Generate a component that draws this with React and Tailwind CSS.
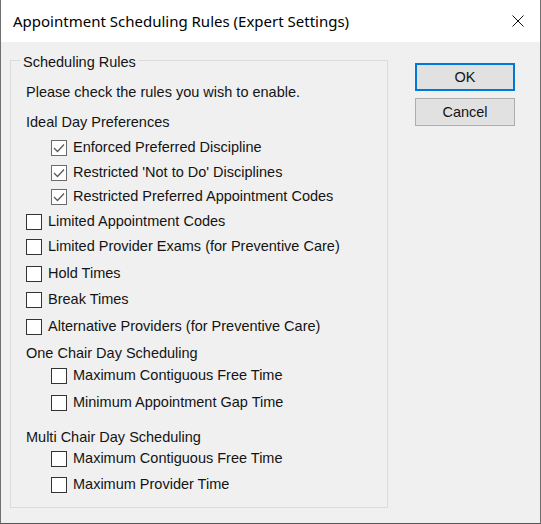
// Appointment Scheduling Rules dialog - classic Windows-style group box with checkbox list.
const rows = [
  { label: "Please check the rules you wish to enable.", level: 0, mt: "mt-[11px]" },
  { label: "Ideal Day Preferences", level: 0, mt: "mt-[6px]" },
  { label: "Enforced Preferred Discipline", level: 2, checked: true, mt: "mt-[1px]" },
  { label: "Restricted 'Not to Do' Disciplines", level: 2, checked: true, mt: "mt-[1px]" },
  { label: "Restricted Preferred Appointment Codes", level: 2, checked: true, mt: "mt-0" },
  { label: "Limited Appointment Codes", level: 1, mt: "mt-[1px]" },
  { label: "Limited Provider Exams (for Preventive Care)", level: 1, mt: "mt-[1px]" },
  { label: "Hold Times", level: 1, mt: "mt-[3px]" },
  { label: "Break Times", level: 1, mt: "mt-[2px]" },
  { label: "Alternative Providers (for Preventive Care)", level: 1, mt: "mt-[3px]" },
  { label: "One Chair Day Scheduling", level: 0, mt: "mt-[3px]" },
  { label: "Maximum Contiguous Free Time", level: 2, mt: "-mt-[2px]" },
  { label: "Minimum Appointment Gap Time", level: 2, mt: "mt-[3px]" },
  { label: "Multi Chair Day Scheduling", level: 0, mt: "mt-[11px]" },
  { label: "Maximum Contiguous Free Time", level: 2, mt: "-mt-[3px]" },
  { label: "Maximum Provider Time", level: 2, mt: "mt-[2px]" },
];

function CheckBox({ checked }) {
  return (
    <span
      className={
        "w-[16px] h-[16px] shrink-0 bg-white border flex items-center justify-center " +
        (checked ? "border-[#6b6b6b]" : "border-[#333333]")
      }
    >
      {checked && (
        <svg width="14" height="14" viewBox="0 0 14 14">
          <polyline points="2,7 5.5,10.5 12,3.5" fill="none" stroke="#5a5a5a" strokeWidth="1.3" />
        </svg>
      )}
    </span>
  );
}

function Row({ row }) {
  return (
    <div
      className={
        "h-[24px] flex items-center " +
        row.mt +
        (row.level === 2 ? " pl-[25px]" : "")
      }
    >
      {row.level > 0 && <CheckBox checked={row.checked} />}
      <span className={row.level > 0 ? "ml-[6px]" : ""}>{row.label}</span>
    </div>
  );
}

export default function App() {
  return (
    <div
      className="w-[541px] h-[524px] flex flex-col border-x border-b border-x-[#6f6f6f] border-b-[#555555] text-[#141414]"
      style={{ fontFamily: '"Liberation Sans", Arial, sans-serif' }}
    >
      <div className="h-[42px] shrink-0 bg-white flex items-center justify-between pl-[12px] pr-[16px]">
        <span
          className="text-[15px] text-black"
          style={{ fontFamily: '"Noto Sans", "Open Sans", sans-serif' }}
        >
          Appointment Scheduling Rules (Expert Settings)
        </span>
        <svg width="12" height="12" viewBox="0 0 12 12">
          <path d="M0.5 0.5 L11.5 11.5 M11.5 0.5 L0.5 11.5" stroke="#111" strokeWidth="1" />
        </svg>
      </div>

      <div className="flex-1 bg-[#f0f0f0] flex text-[14.5px]">
        <fieldset className="ml-[9px] mt-[8px] w-[378px] h-[458px] border border-[#dcdcdc] pl-[15px]">
          <legend className="ml-[-5px] px-[2px] pt-[4px] leading-[16px]">Scheduling Rules</legend>
          {rows.map((row, i) => (
            <Row key={i} row={row} />
          ))}
        </fieldset>

        <div className="ml-[27px] mt-[21px] flex flex-col gap-[7px]">
          <button className="w-[100px] h-[28px] bg-[#e1e1e1] border-2 border-[#0078d7] leading-none">
            OK
          </button>
          <button className="w-[100px] h-[28px] bg-[#e1e1e1] border border-[#adadad] leading-none">
            Cancel
          </button>
        </div>
      </div>
    </div>
  );
}
